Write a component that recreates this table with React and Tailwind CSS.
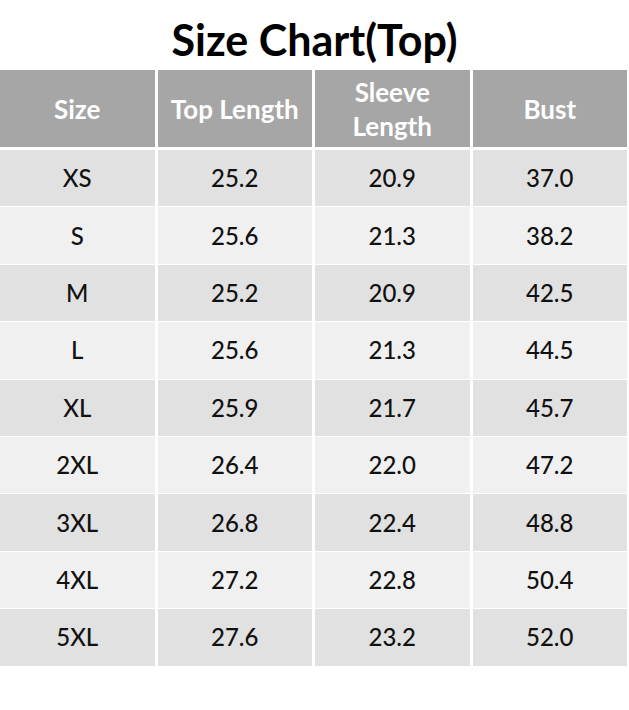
import React from "react";

const rows = [
  ["XS", "25.2", "20.9", "37.0"],
  ["S", "25.6", "21.3", "38.2"],
  ["M", "25.2", "20.9", "42.5"],
  ["L", "25.6", "21.3", "44.5"],
  ["XL", "25.9", "21.7", "45.7"],
  ["2XL", "26.4", "22.0", "47.2"],
  ["3XL", "26.8", "22.4", "48.8"],
  ["4XL", "27.2", "22.8", "50.4"],
  ["5XL", "27.6", "23.2", "52.0"],
];

export default function App() {
  return (
    <div className="w-[629px] h-[710px] bg-white font-['Lato','Open_Sans',sans-serif] overflow-hidden">
      <h1 className="h-[70px] pt-[16px] text-center text-[43px] leading-[48px] font-bold text-black">
        Size Chart(Top)
      </h1>
      <div className="w-[627px] grid grid-cols-4 gap-x-[3px]">
        {["Size", "Top Length", "Sleeve\nLength", "Bust"].map((h) => (
          <div
            key={h}
            className="h-[77px] bg-[#a6a6a6] flex items-center justify-center text-center text-white font-bold text-[26px] leading-[34px] whitespace-pre-line"
          >
            {h}
          </div>
        ))}
      </div>
      <div className="w-[627px] mt-[3px] grid grid-cols-4 gap-x-[3px] gap-y-px">
        {rows.map((r, i) =>
          r.map((c, j) => (
            <div
              key={i + "-" + j}
              className={
                "h-[56.4px] flex items-center justify-center text-[24px] font-medium text-[#111] " +
                (i % 2 === 0 ? "bg-[#e1e1e1]" : "bg-[#f0f0f0]")
              }
            >
              {c}
            </div>
          ))
        )}
      </div>
    </div>
  );
}
